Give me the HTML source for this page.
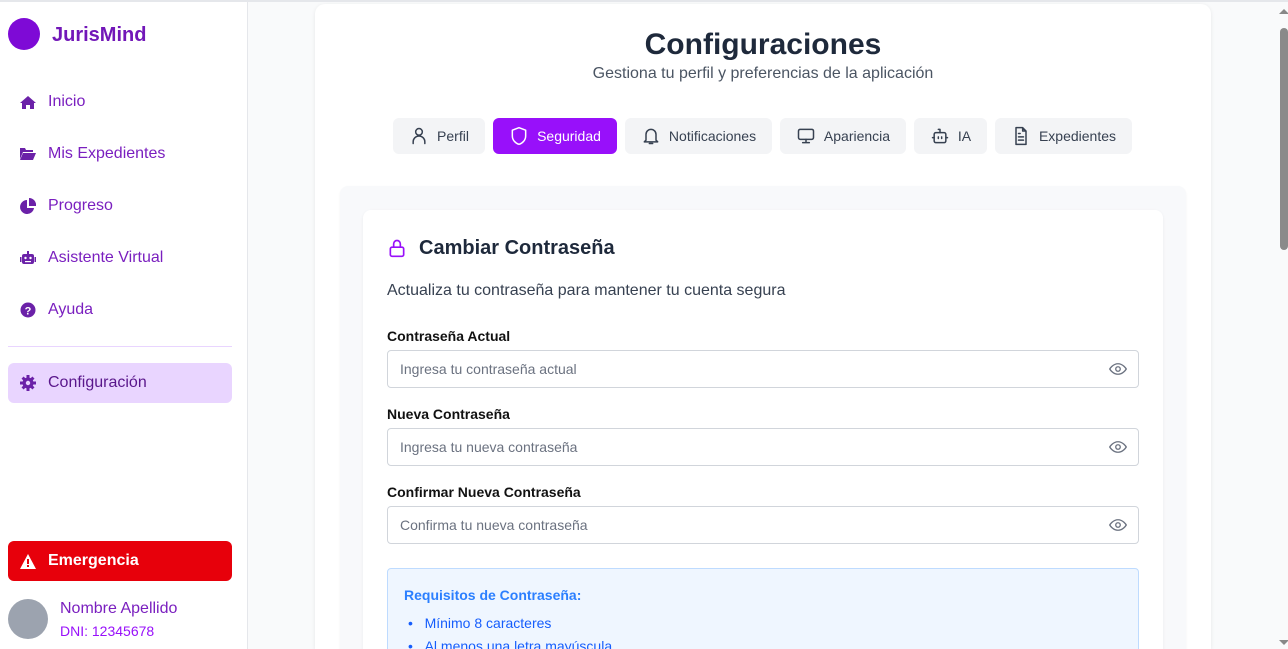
<!DOCTYPE html>
<html><head><meta charset="utf-8"><style>
*{box-sizing:border-box;margin:0;padding:0}
html,body{width:1288px;height:649px;overflow:hidden}
body{font-family:"Liberation Sans",sans-serif;background:#f9fafb;position:relative}
.top{position:absolute;left:0;top:0;width:1288px;height:2px;background:#e5e7eb;z-index:5}
.sb{position:absolute;left:0;top:2px;width:248px;height:647px;background:#fff;border-right:1px solid #e5e7eb;overflow:hidden}
.logo{position:absolute;left:8px;top:16px;width:32px;height:32px;border-radius:50%;background:#7e0ad6}
.brand{position:absolute;left:52px;top:22px;font-size:20px;font-weight:bold;color:#7217b8}
.nav{position:absolute;left:20px;font-size:16px;color:#7a1fbf;display:flex;align-items:center}
.nav svg{width:16px;height:16px;margin-right:12px;fill:#6b21a8}
.hr{position:absolute;left:8px;top:344px;width:224px;height:1px;background:#e9d5ff}
.act{position:absolute;left:8px;top:361px;width:224px;height:40px;background:#e9d5ff;border-radius:6px}
.em{position:absolute;left:8px;top:539px;width:224px;height:40px;background:#e7000b;border-radius:6px;color:#fff;font-weight:bold;font-size:16px;display:flex;align-items:center;padding-left:12px}
.av{position:absolute;left:8px;top:597px;width:40px;height:40px;border-radius:50%;background:#9ca3af}
.panel{position:absolute;left:315px;top:4px;width:896px;height:645px;background:#fff;border-radius:10px 10px 0 0;box-shadow:0 1px 4px rgba(0,0,0,.08);overflow:hidden}
h1{position:absolute;left:0;width:100%;top:24px;text-align:center;font-size:30px;color:#1e293b;font-weight:bold}
.sub{position:absolute;left:0;width:100%;top:61px;text-align:center;font-size:16px;color:#4b5563}
.tab{position:absolute;top:114px;height:36px;background:#f3f4f6;border-radius:6px;display:flex;align-items:center;justify-content:center;font-size:14px;color:#374151;gap:8px}
.tab svg{width:20px;height:20px;fill:none;stroke:#374151;stroke-width:1.8;stroke-linecap:round;stroke-linejoin:round}
.tab.on{background:#9810fa;color:#fff}.tab.on svg{stroke:#fff}
.gray{position:absolute;left:25px;top:182px;width:846px;height:470px;background:#f8f9fb;border-radius:8px;box-shadow:0 1px 2px rgba(0,0,0,.05)}
.card{position:absolute;left:48px;top:206px;width:800px;height:450px;background:#fff;border-radius:8px;box-shadow:0 1px 3px rgba(0,0,0,.06)}
.lbl{position:absolute;left:24px;font-size:14px;font-weight:bold;color:#111}
.inp{position:absolute;left:24px;width:752px;height:38px;border:1px solid #d1d5db;border-radius:4px;font-size:14px;color:#6b7280;padding:10px 12px}
.inp svg{position:absolute;right:11px;top:10px;width:18px;height:16px;fill:none;stroke:#6b7280;stroke-width:1.8}
.req{position:absolute;left:24px;top:358px;width:752px;height:130px;background:#eff6ff;border:1px solid #bedbff;border-radius:4px}
.scroll{position:absolute;left:1276px;top:0;width:12px;height:649px;background:#f9fafb}
.thumb{position:absolute;left:1280px;top:28px;width:8px;height:222px;background:#8a8a8a;border-radius:4px}
</style></head><body>
<div class="top"></div>
<div class="sb">
<div class="logo"></div><div class="brand">JurisMind</div>
<div class="nav" style="top:91px"><svg viewBox="0 0 16 16"><path d="M8 2L0 9h2v6h4v-4h4v4h4V9h2z"/></svg>Inicio</div>
<div class="nav" style="top:143px"><svg viewBox="0 0 16 16"><path d="M0 2h5l1 2h7v2H3l-3 7zM3 7h13l-3 7H0z"/></svg>Mis Expedientes</div>
<div class="nav" style="top:195px"><svg viewBox="0 0 16 16"><path d="M7 2a7 7 0 1 0 7 8H7zM9 0v8h7a7 7 0 0 0-7-8z"/></svg>Progreso</div>
<div class="nav" style="top:247px"><svg viewBox="0 0 16 16"><rect x="2" y="4" width="12" height="10" rx="2"/><path d="M0 7h1.5v5H0zM14.5 7H16v5h-1.5zM7 1h2v3H7z"/><circle cx="5.5" cy="8" r="1.2" fill="#fff"/><circle cx="10.5" cy="8" r="1.2" fill="#fff"/><path d="M5 11h6v1.2H5z" fill="#fff"/></svg>Asistente Virtual</div>
<div class="nav" style="top:299px"><svg viewBox="0 0 16 16"><circle cx="8" cy="8" r="7.5"/><text x="8" y="12.5" font-size="11" fill="#fff" text-anchor="middle" font-weight="bold" font-family="Liberation Sans">?</text></svg>Ayuda</div>
<div class="hr"></div><div class="act"></div>
<div class="nav" style="top:372px;color:#59168b"><svg viewBox="0 0 16 16"><circle cx="8" cy="8" r="5.5"/><path d="M6.5 0h3v3h-3zM6.5 13h3v3h-3zM0 6.5h3v3H0zM13 6.5h3v3h-3zM1.5 3.6L3.6 1.5l2 2L3.5 5.6zM10.4 12.5l2.1-2.1 2 2-2.1 2.1zM1.5 12.4l2-2 2.1 2.1-2 2zM10.4 3.5l2-2 2.1 2.1-2 2z"/><circle cx="8" cy="8" r="2.2" fill="#e9d5ff"/></svg>Configuración</div>
<div class="em"><svg width="16" height="15" viewBox="0 0 16 15" style="margin-right:12px"><path d="M8 0l8 15H0z" fill="#fff"/><path d="M7 5h2v5H7zM7 11h2v2H7z" fill="#e7000b"/></svg>Emergencia</div>
<div class="av"></div>
<div style="position:absolute;left:60px;top:598px;font-size:16px;color:#7a1fbf">Nombre Apellido</div>
<div style="position:absolute;left:60px;top:621px;font-size:14px;color:#9810fa">DNI: 12345678</div>
</div>
<div class="panel">
<h1>Configuraciones</h1>
<div class="sub">Gestiona tu perfil y preferencias de la aplicación</div>
<div class="tab" style="left:78px;width:92px"><svg viewBox="0 0 24 24"><circle cx="12" cy="7" r="4"/><path d="M5 21v-2a7 7 0 0 1 14 0v2"/></svg>Perfil</div>
<div class="tab on" style="left:178px;width:124px"><svg viewBox="0 0 24 24"><path d="M12 2l8 3v7c0 5-4 9-8 10-4-1-8-5-8-10V5z"/></svg>Seguridad</div>
<div class="tab" style="left:310px;width:147px"><svg viewBox="0 0 24 24"><path d="M6 17V10a6 6 0 0 1 12 0v7l2 2H4zM10 21h4"/></svg>Notificaciones</div>
<div class="tab" style="left:465px;width:126px"><svg viewBox="0 0 24 24"><rect x="3" y="4" width="18" height="12" rx="2"/><path d="M12 16v4M8 20h8"/></svg>Apariencia</div>
<div class="tab" style="left:599px;width:73px"><svg viewBox="0 0 24 24"><rect x="5" y="8" width="14" height="12" rx="2"/><path d="M12 8V4h-2M3 14h2M19 14h2M10 13v2M14 13v2"/></svg>IA</div>
<div class="tab" style="left:680px;width:137px"><svg viewBox="0 0 24 24"><path d="M14 2H6v20h12V6zM14 2v4h4M9 13h6M9 17h6M9 9h2"/></svg>Expedientes</div>
<div class="gray"></div>
<div class="card">
<svg style="position:absolute;left:24px;top:28px" width="20" height="20" viewBox="0 0 24 24" fill="none" stroke="#9810fa" stroke-width="2"><rect x="4" y="11" width="16" height="11" rx="2"/><path d="M8 11V7a4 4 0 0 1 8 0v4"/></svg>
<div style="position:absolute;left:56px;top:27px;font-size:20px;font-weight:bold;color:#1e293b">Cambiar Contraseña</div>
<div style="position:absolute;left:24px;top:72px;font-size:16px;color:#374151">Actualiza tu contraseña para mantener tu cuenta segura</div>
<div class="lbl" style="top:118px">Contraseña Actual</div>
<div class="inp" style="top:140px">Ingresa tu contraseña actual<svg viewBox="0 0 24 20"><path d="M1 10s4-7 11-7 11 7 11 7-4 7-11 7S1 10 1 10z"/><circle cx="12" cy="10" r="3"/></svg></div>
<div class="lbl" style="top:196px">Nueva Contraseña</div>
<div class="inp" style="top:218px">Ingresa tu nueva contraseña<svg viewBox="0 0 24 20"><path d="M1 10s4-7 11-7 11 7 11 7-4 7-11 7S1 10 1 10z"/><circle cx="12" cy="10" r="3"/></svg></div>
<div class="lbl" style="top:274px">Confirmar Nueva Contraseña</div>
<div class="inp" style="top:296px">Confirma tu nueva contraseña<svg viewBox="0 0 24 20"><path d="M1 10s4-7 11-7 11 7 11 7-4 7-11 7S1 10 1 10z"/><circle cx="12" cy="10" r="3"/></svg></div>
<div class="req">
<div style="position:absolute;left:16px;top:18px;font-size:14px;font-weight:bold;color:#2b7fff">Requisitos de Contraseña:</div>
<div style="position:absolute;left:20px;top:46px;font-size:14px;color:#155dfc">•&nbsp;&nbsp;&nbsp;Mínimo 8 caracteres</div>
<div style="position:absolute;left:20px;top:69px;font-size:14px;color:#155dfc">•&nbsp;&nbsp;&nbsp;Al menos una letra mayúscula</div>
</div>
</div>
</div>
<div class="scroll"></div><div class="thumb"></div>
<div style="position:absolute;left:1279px;top:9px;width:0;height:0;border-left:5px solid transparent;border-right:5px solid transparent;border-bottom:5px solid #888"></div>
<div style="position:absolute;left:1279px;top:640px;width:0;height:0;border-left:5px solid transparent;border-right:5px solid transparent;border-top:5px solid #888"></div>
</body></html>
